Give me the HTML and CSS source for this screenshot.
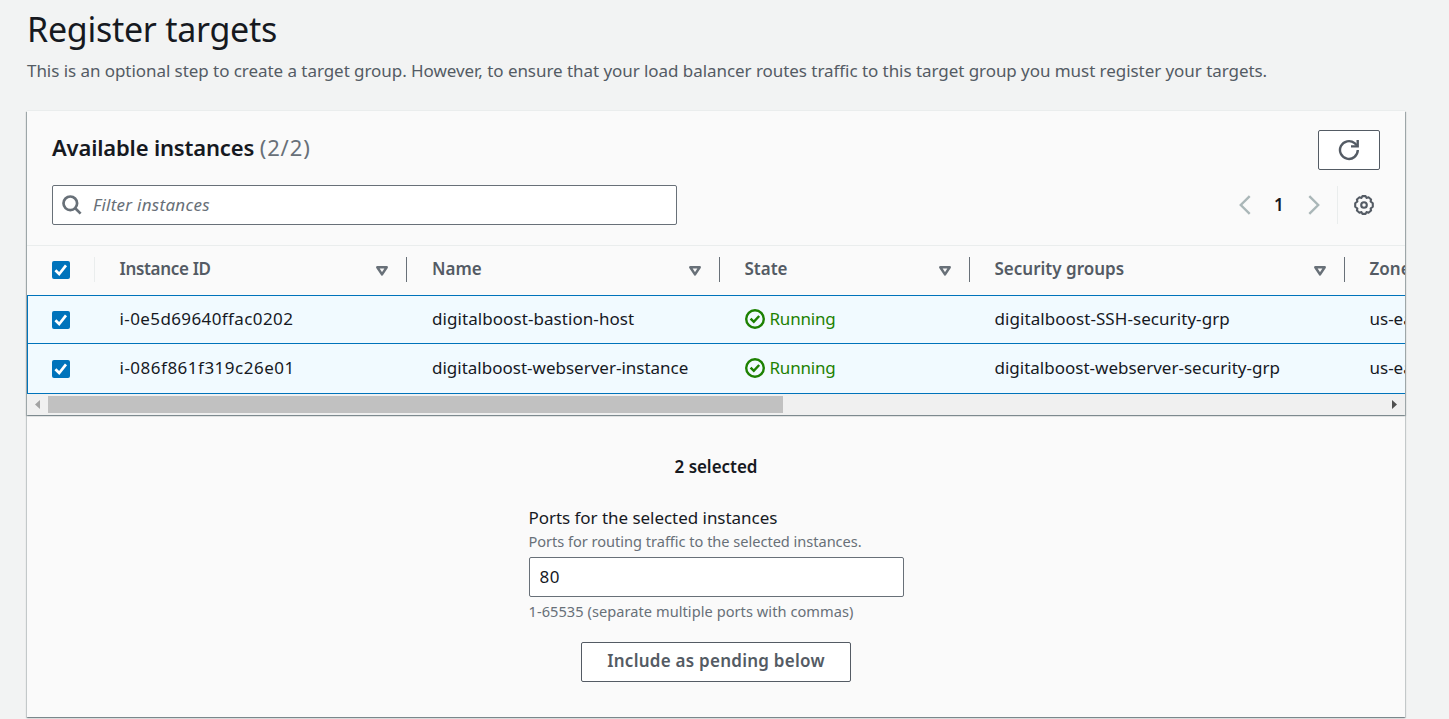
FILE: index.html
```html
<!DOCTYPE html>
<html lang="en">
<head>
<meta charset="utf-8">
<title>Register targets</title>
<link rel="stylesheet" href="styles.css">
</head>
<body>
<svg class="defs" aria-hidden="true">
  <symbol id="tick" viewBox="0 0 18 18"><path d="M3.4 9.2 7.2 13 14 4.4" fill="none" stroke="#fff" stroke-width="2.7"/></symbol>
  <symbol id="sort" viewBox="0 0 14 12"><path d="M2.3 2.2h9.4L7 9.4z" fill="none" stroke="#687078" stroke-width="2.5" stroke-linejoin="round"/></symbol>
  <symbol id="ok" viewBox="0 0 20 20"><circle cx="10" cy="10" r="8.8" fill="none" stroke="#1d8102" stroke-width="2.4"/><path d="M5.6 9.6 8.8 12.8 14.2 7" fill="none" stroke="#1d8102" stroke-width="2.5"/></symbol>
</svg>
<main class="page">
  <h1 class="title">Register targets</h1>
  <p class="intro">This is an optional step to create a target group. However, to ensure that your load balancer routes traffic to this target group you must register your targets.</p>
  <section class="panel">
    <div class="instances">
      <header class="head">
        <div class="head-row">
          <h2 class="heading">Available instances <span class="count">(2/2)</span></h2>
          <button class="refresh" aria-label="Refresh">
            <svg width="22" height="22" viewBox="0 0 22 22" fill="none" stroke="#545b64" stroke-width="2.4"><path d="M19.8 11a8.9 8.9 0 1 1-3.2-6.8l2.4 2.3"/><path d="M19.7 1v6.4H13"/></svg>
          </button>
        </div>
        <div class="tools">
          <div class="search">
            <svg width="20" height="20" viewBox="0 0 20 20" fill="none" stroke="#687078" stroke-width="2.7"><circle cx="8.3" cy="8.3" r="6.8"/><path d="m13 13 5.6 5.6"/></svg>
            <span class="placeholder">Filter instances</span>
          </div>
          <div class="pager">
            <svg width="12" height="20" viewBox="0 0 12 20" fill="none" stroke="#aab7b8" stroke-width="2.4"><path d="M10.7 1.2 1.8 10l8.9 8.8"/></svg>
            <b class="page-no">1</b>
            <svg width="12" height="20" viewBox="0 0 12 20" fill="none" stroke="#aab7b8" stroke-width="2.4"><path d="M1.3 1.2 10.2 10l-8.9 8.8"/></svg>
          </div>
          <div class="settings">
            <svg width="20" height="20" viewBox="0 0 20 20" fill="none" stroke="#545b64" stroke-width="2.1" stroke-linejoin="round"><path d="M8.4 1.1h3.2l.9 1.8 2-.6 2.6 2.2-.5 2 2.2 1.8v3.4l-2.2 1.8.5 2-2.6 2.2-2-.6-.9 1.8H8.4l-.9-1.8-2 .6-2.6-2.2.5-2-2.2-1.8V8.3l2.2-1.8-.5-2 2.6-2.2 2 .6z"/><circle cx="10" cy="10" r="2.8"/></svg>
          </div>
        </div>
      </header>
      <div class="table">
        <div class="row thead">
          <div class="cell check"><span class="box"><svg><use href="#tick"/></svg></span></div>
          <div class="cell th-id">Instance ID<svg class="sort"><use href="#sort"/></svg></div>
          <div class="cell">Name<svg class="sort"><use href="#sort"/></svg></div>
          <div class="cell">State<svg class="sort"><use href="#sort"/></svg></div>
          <div class="cell">Security groups<svg class="sort"><use href="#sort"/></svg></div>
          <div class="cell">Zone</div>
        </div>
        <div class="row item">
          <div class="cell check"><span class="box"><svg><use href="#tick"/></svg></span></div>
          <div class="cell id">i-0e5d69640ffac0202</div>
          <div class="cell host">digitalboost-bastion-host</div>
          <div class="cell state"><svg class="ok"><use href="#ok"/></svg>Running</div>
          <div class="cell host">digitalboost-SSH-security-grp</div>
          <div class="cell">us-east-1a</div>
        </div>
        <div class="row item last">
          <div class="cell check"><span class="box"><svg><use href="#tick"/></svg></span></div>
          <div class="cell id">i-086f861f319c26e01</div>
          <div class="cell">digitalboost-webserver-instance</div>
          <div class="cell state"><svg class="ok"><use href="#ok"/></svg>Running</div>
          <div class="cell">digitalboost-webserver-security-grp</div>
          <div class="cell">us-east-1a</div>
        </div>
      </div>
      <div class="scrollbar">
        <svg class="arrow" viewBox="0 0 21 21"><path d="M13 6v9l-5-4.5z" fill="#a3a3a3"/></svg>
        <div class="track"><div class="thumb"></div></div>
        <svg class="arrow" viewBox="0 0 21 21"><path d="M8 6v9l5-4.5z" fill="#505050"/></svg>
      </div>
    </div>
    <div class="ports">
      <b class="selected">2 selected</b>
      <div class="field">
        <label class="label" for="port">Ports for the selected instances</label>
        <span class="hint">Ports for routing traffic to the selected instances.</span>
        <input class="input" id="port" value="80">
        <span class="hint constraint">1-65535 (separate multiple ports with commas)</span>
      </div>
      <button class="include">Include as pending below</button>
    </div>
  </section>
</main>
</body>
</html>
```
FILE: styles.css
```css
* { box-sizing: border-box; }
body {
  margin: 0;
  height: 719px;
  overflow: hidden;
  background: #f2f3f3;
  color: #16191f;
  font: 17px/24px "Noto Sans", "Open Sans", sans-serif;
}
svg { display: block; flex: none; }
.defs { position: absolute; width: 0; height: 0; }
.page { padding: 7px 44px 0 27px; }
.title { margin: 0; font-size: 34px; line-height: 45px; font-weight: 400; letter-spacing: -.27px; }
.intro { margin: 7px 0 28px; color: #545b64; letter-spacing: -.055px; white-space: nowrap; }
.panel {
  height: 606px;
  background: #fafafa;
  box-shadow: 0 1px 1px 0 rgba(0, 28, 36, .3), 1px 1px 1px 0 rgba(0, 28, 36, .15), -1px 1px 1px 0 rgba(0, 28, 36, .15), 0 -1px 0 0 #eaeded;
}
.instances {
  height: 304px;
  box-shadow: 0 1px 1px 0 rgba(0, 28, 36, .3), 1px 1px 1px 0 rgba(0, 28, 36, .15), -1px 1px 1px 0 rgba(0, 28, 36, .15);
}
.head { height: 135px; padding: 19px 25px 0; border-bottom: 1px solid #eaeded; }
.head-row { display: flex; justify-content: space-between; height: 55px; }
.heading { margin: 1px 0 0; font-size: 22px; line-height: 32px; font-weight: 600; letter-spacing: -.17px; }
.count { color: #687078; font-weight: 400; letter-spacing: .9px; }
.refresh {
  display: grid;
  place-items: center;
  width: 62px;
  height: 40px;
  padding: 0;
  border: 1px solid #545b64;
  border-radius: 2px;
  background: #fff;
}
.tools { display: flex; align-items: center; height: 40px; }
.search {
  display: flex;
  align-items: center;
  gap: 11px;
  width: 625px;
  height: 40px;
  padding-left: 9px;
  border: 1px solid #687078;
  border-radius: 2px;
  background: #fff;
}
.placeholder { color: #687078; font-style: italic; letter-spacing: .27px; }
.pager { display: flex; align-items: center; gap: 23px; margin-left: auto; }
.page-no { width: 11px; font-weight: 600; }
.settings { display: flex; align-items: center; height: 38px; margin: 0 6px 0 17px; padding-left: 16px; border-left: 1px solid #eaeded; }
.table { width: 1378px; overflow: hidden; }
.row { display: grid; grid-template-columns: 67.5px 312.5px 312.5px 250px 375px 200px; }
.cell { display: flex; align-items: center; min-width: 0; padding: 0 0 2px 25px; white-space: nowrap; }
.thead { height: 49px; color: #545b64; font-weight: 600; }
.thead .cell { position: relative; padding-bottom: 4px; }
.thead .cell::after {
  content: "";
  position: absolute;
  right: 0;
  top: 11px;
  width: 1px;
  height: 25px;
  background: #687078;
}
.thead .check::after { background: #eaeded; }
.th-id { letter-spacing: -.33px; }
.thead .check { padding-bottom: 2px; }
.sort { width: 14px; height: 12px; margin: 4px 18px 0 auto; }
.item { width: 1600px; height: 48px; border-top: 1px solid #0073bb; border-left: 1px solid #0073bb; background: #f1faff; }
.item .cell { margin-left: -1px; }
.item .check { padding-bottom: 0; }
.last { height: 51px; border-bottom: 1px solid #0073bb; }
.id { letter-spacing: .4px; }
.last .id { letter-spacing: .5px; }
.host { letter-spacing: .07px; }
.box { width: 18px; height: 18px; border-radius: 2px; background: #0073bb; }
.box svg { width: 18px; height: 18px; }
.state { gap: 5px; color: #1d8102; letter-spacing: -.2px; }
.ok { width: 20px; height: 20px; margin-top: 1px; }
.scrollbar { display: flex; align-items: center; height: 21px; background: #f0f0f0; }
.arrow { width: 21px; height: 21px; }
.track { flex: 1; }
.thumb { width: 735px; height: 17px; background: #c1c1c1; }
.ports { display: flex; flex-direction: column; align-items: center; padding-top: 40px; }
.selected { font-weight: 600; letter-spacing: -.04px; }
.field { display: flex; flex-direction: column; width: 375px; margin: 27px 0 21px; }
.label { letter-spacing: -.04px; }
.hint { color: #687078; font-size: 14.6px; line-height: 20px; margin: 1px 0 6px; letter-spacing: -.03px; white-space: nowrap; }
.constraint { margin: 4px 0 0; letter-spacing: .05px; }
.input {
  height: 40px;
  padding: 0 10px 2px;
  border: 1px solid #687078;
  border-radius: 2px;
  background: #fff;
  color: #16191f;
  font: inherit;
  letter-spacing: .5px;
}
.include {
  width: 270px;
  height: 40px;
  padding: 0 0 2px;
  border: 1px solid #545b64;
  border-radius: 2px;
  background: #fff;
  color: #545b64;
  font: inherit;
  font-weight: 600;
  letter-spacing: .25px;
}
```
